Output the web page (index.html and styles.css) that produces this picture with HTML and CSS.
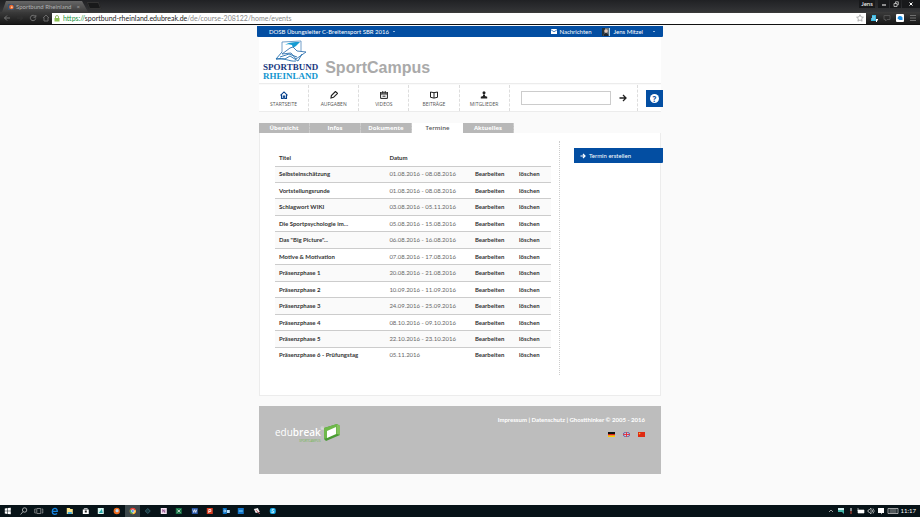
FILE: index.html
```html
<!DOCTYPE html>
<html lang="de">
<head>
<meta charset="utf-8">
<title>Sportbund Rheinland</title>
<link rel="stylesheet" href="styles.css">
</head>
<body>
<header class="browser">
  <div class="titlebar">
    <div class="browser-tab">
      <svg class="favicon" viewBox="0 0 6 6"><rect width="6" height="6" fill="#365070"/><circle cx="3.4" cy="3" r="2.3" fill="#e8682c"/><circle cx="3.8" cy="3.3" r="1" fill="#ffc29a"/></svg>
      <span class="tab-title">Sportbund Rheinland</span><span class="tab-close">×</span>
    </div>
    <div class="new-tab"></div>
    <div class="window-buttons">
      <button class="profile">Jens</button>
      <button class="win" aria-label="Minimieren"><svg viewBox="0 0 6 6"><path d="M1 4h4" stroke="#fff"/></svg></button>
      <button class="win" aria-label="Wiederherstellen"><svg viewBox="0 0 6 6"><path d="M1 2.500h3v3H1zM2.500 2.500V.8H5.300v3H4" fill="none" stroke="#ccc" stroke-width=".8"/></svg></button>
      <button class="win close" aria-label="Schließen"><svg viewBox="0 0 6 6"><path d="M1.500 1.500l3 3m0-3l-3 3" stroke="#fff"/></svg></button>
    </div>
  </div>
  <div class="toolbar">
    <div class="history">
      <svg viewBox="0 0 8 8"><path d="M7 4H1.500M4 1.500L1.500 4 4 6.500" fill="none" stroke="#747474"/></svg>
      <svg viewBox="0 0 8 8"><path d="M1 4h5.500M4 1.500L6.500 4 4 6.500" fill="none" stroke="#333"/></svg>
      <svg viewBox="0 0 8 8"><path d="M6.300 2.500A2.700 2.700 0 1 0 6.700 4.500M6.800 1v2.200H4.500" fill="none" stroke="#747474"/></svg>
      <svg viewBox="0 0 8 8"><path d="M1 4l3-3 3 3M2 3.500V7h4V3.500" fill="none" stroke="#686868"/></svg>
    </div>
    <div class="address">
      <svg class="lock" viewBox="0 0 6 7"><path d="M1.500 3V2a1.500 1.500 0 0 1 3 0v1" fill="none" stroke="#9ab86f"/><rect x=".5" y="3" width="5" height="3.500" fill="#8cc152"/></svg>
      <span class="url"><span class="scheme">https://</span><b>sportbund-rheinland.edubreak.de</b>/de/course-208122/home/events</span>
      <svg class="star" viewBox="0 0 8 8"><path d="M4 .7l1 2.200 2.400.3-1.800 1.600.5 2.400L4 6 1.900 7.200l.5-2.400L.6 3.200 3 2.900z" fill="#fff" stroke="#888" stroke-width=".6"/></svg>
    </div>
    <div class="extensions">
      <svg viewBox="0 0 8 8"><path d="M2 1h4v6H1V4h1z" fill="#38b6df"/><path d="M2 3h3M2 5h3" stroke="#d3f2fb" stroke-width=".6"/><path d="M6 5h2v1.500H7V8H6z" fill="#fff"/></svg>
      <svg viewBox="0 0 8 8"><path d="M1 1.500h6v4H4L2.500 7V5.500H1z" fill="none" stroke="#515151"/></svg>
      <svg viewBox="0 0 8 8"><rect width="8" height="8" rx="1" fill="#fff"/><path d="M1.500 4.500a2.600 2.600 0 0 1 5-1v2.400h-3z" fill="#1a91e8"/></svg>
      <svg viewBox="0 0 8 8"><path d="M1 1.500h6M1 4h6M1 6.500h6" stroke="#777" stroke-width=".9"/></svg>
    </div>
  </div>
</header>

<main class="page">
  <div class="topbar">
    <a class="course" href="#">DOSB Übungsleiter C-Breitensport SBR 2016 <i class="caret"></i></a>
    <a class="messages" href="#"><svg viewBox="0 0 6 5"><rect width="6" height="5" fill="#fff"/><path d="M0 .8l3 2 3-2" fill="none" stroke="#034ea2" stroke-width=".7"/></svg>Nachrichten</a>
    <a class="user" href="#"><svg viewBox="0 0 8 8"><rect width="8" height="8" fill="#66717c"/><path d="M0 0h3v3L1 8H0z" fill="#263238"/><circle cx="4" cy="3" r="1.800" fill="#e2c8b8"/><path d="M1.500 8c0-4 5-4 5 0" fill="#20252c"/><path d="M7.500 0v8" stroke="#a8d8f4"/></svg>Jens Mitzel <i class="caret"></i></a>
  </div>
  <div class="brand">
    <a class="logo" href="#">
      <svg viewBox="0 0 32 23">
        <path d="M7 12V2L26 1v11" fill="#fff" stroke="#5189bd" stroke-width=".8"/>
        <path d="M10 5C14 2 19 2 25 2l-4 4-3 2-1-3C14 4 12 4 10 5z" fill="#169bd2"/>
        <path d="M15 8L7 14l9-1 5 6 10-7-9-1-4-4z" fill="#fff" stroke="#3474b0" stroke-width=".9"/>
        <path d="M7 12L1 19h9l5-3 8 5 4-7M1 19c8-2 13 3 20 2M5 17l9-3 8 3" fill="none" stroke="#216eae" stroke-width=".9"/>
      </svg>
      <span class="logo-top">SPORTBUND</span><span class="logo-bottom">RHEINLAND</span>
    </a>
    <h1>SportCampus</h1>
  </div>
  <div class="mainnav">
    <nav>
      <a href="#"><svg viewBox="0 0 8 8"><path d="M.5 4.300L4 .9l3.500 3.400M1.500 3.500v4h1.800V5h1.400v2.500h1.800v-4" fill="none" stroke="#06418c" stroke-width="1.100"/></svg>STARTSEITE</a>
      <a href="#"><svg viewBox="0 0 8 8"><path d="M1 7l.4-2.500 4-4L7.500 2.300l-4 4z" fill="none" stroke="#222" stroke-width="1.200"/></svg>AUFGABEN</a>
      <a href="#"><svg viewBox="0 0 8 8"><path d="M.6 3h6.800v4.400H.6zM.6 3V1M7.400 1v2M2.800 0v2.500M5.200 0v2.500M.6 1.800h6.800M2.500 5.200h3" fill="none" stroke="#222" stroke-width="1"/></svg>VIDEOS</a>
      <a href="#"><svg viewBox="0 0 8 8"><path d="M4 1.700L.5 1v5.300l3.500.8 3.500-.8V1zM4 1.700V7" fill="none" stroke="#222" stroke-width="1"/></svg>BEITRÄGE</a>
      <a href="#"><svg viewBox="0 0 8 8"><circle cx="4" cy="1.700" r="1.500" fill="#222"/><path d="M3 3.500h2v1.500l2.200.7V7.500H.8V5.700L3 5z" fill="#222"/></svg>MITGLIEDER</a>
    </nav>
    <form class="search">
      <input type="search" aria-label="Suche">
      <button type="button" aria-label="Suchen"><svg viewBox="0 0 8 8"><path d="M.5 4H7M4 1l3 3-3 3" fill="none" stroke="#222" stroke-width="1.300"/></svg></button>
    </form>
    <div class="help-cell"><button class="help" type="button" aria-label="Hilfe"><span>?</span></button></div>
  </div>
  <nav class="tabs">
    <a href="#">Übersicht</a><a href="#">Infos</a><a href="#">Dokumente</a><a class="active" href="#">Termine</a><a href="#">Aktuelles</a>
  </nav>
  <div class="content">
    <section class="events">
      <table>
        <colgroup><col class="c-title"><col class="c-date"><col class="c-edit"><col class="c-delete"></colgroup>
        <thead><tr><th>Titel</th><th>Datum</th><th></th><th></th></tr></thead>
        <tbody>
          <tr><th>Selbsteinschätzung</th><td>01.08.2016 - 08.08.2016</td><td><a href="#">Bearbeiten</a></td><td><a href="#">löschen</a></td></tr>
          <tr><th>Vortstellungsrunde</th><td>01.08.2016 - 08.08.2016</td><td><a href="#">Bearbeiten</a></td><td><a href="#">löschen</a></td></tr>
          <tr><th>Schlagwort WIKI</th><td>03.08.2016 - 05.11.2016</td><td><a href="#">Bearbeiten</a></td><td><a href="#">löschen</a></td></tr>
          <tr><th>Die Sportpsychologie im...</th><td>05.08.2016 - 15.08.2016</td><td><a href="#">Bearbeiten</a></td><td><a href="#">löschen</a></td></tr>
          <tr><th>Das "Big Picture"...</th><td>06.08.2016 - 16.08.2016</td><td><a href="#">Bearbeiten</a></td><td><a href="#">löschen</a></td></tr>
          <tr><th>Motive &amp; Motivation</th><td>07.08.2016 - 17.08.2016</td><td><a href="#">Bearbeiten</a></td><td><a href="#">löschen</a></td></tr>
          <tr><th>Präsenzphase 1</th><td>20.08.2016 - 21.08.2016</td><td><a href="#">Bearbeiten</a></td><td><a href="#">löschen</a></td></tr>
          <tr><th>Präsenzphase 2</th><td>10.09.2016 - 11.09.2016</td><td><a href="#">Bearbeiten</a></td><td><a href="#">löschen</a></td></tr>
          <tr><th>Präsenzphase 3</th><td>24.09.2016 - 25.09.2016</td><td><a href="#">Bearbeiten</a></td><td><a href="#">löschen</a></td></tr>
          <tr><th>Präsenzphase 4</th><td>08.10.2016 - 09.10.2016</td><td><a href="#">Bearbeiten</a></td><td><a href="#">löschen</a></td></tr>
          <tr><th>Präsenzphase 5</th><td>22.10.2016 - 23.10.2016</td><td><a href="#">Bearbeiten</a></td><td><a href="#">löschen</a></td></tr>
          <tr><th>Präsenzphase 6 - Prüfungstag</th><td>05.11.2016</td><td><a href="#">Bearbeiten</a></td><td><a href="#">löschen</a></td></tr>
        </tbody>
      </table>
    </section>
    <aside><a class="create" href="#"><svg viewBox="0 0 6 6"><path d="M.5 3h4.500M3 1l2 2-2 2" fill="none" stroke="#fff" stroke-width="1.200"/></svg>Termin erstellen</a></aside>
  </div>
  <footer class="footer">
    <a class="edubreak" href="#">
      <span class="wordmark"><span class="word">edu<b>break</b></span><small>SPORTCAMPUS</small></span><sup>®</sup>
      <svg viewBox="0 0 16 17"><path d="M0 4L13 0l3 2v9L2 17l-2-2z" fill="#4a9b35"/><path d="M0 4L13 0v10L0 15z" fill="#6fb84b"/><path d="M3 7l9-4v7l-9 4z" fill="#fff"/><path d="M13 0l3 2v9l-3-1z" fill="#83c25d"/></svg>
    </a>
    <div class="footer-right">
      <div class="legal"><a href="#">Impressum</a> | <a href="#">Datenschutz</a> | <a href="#">Ghostthinker © 2005 - 2016</a></div>
      <div class="flags">
        <a href="#" aria-label="Deutsch"><svg viewBox="0 0 7 5"><path d="M0 0h7v2H0z" fill="#111"/><path d="M0 2h7v1.500H0z" fill="#d21"/><path d="M0 3.500h7V5H0z" fill="#fc0"/></svg></a>
        <a href="#" aria-label="English"><svg viewBox="0 0 7 5"><path d="M0 0h7v5H0z" fill="#35468f"/><path d="M0 0l7 5M7 0L0 5" stroke="#e8c9d4" stroke-width=".9"/><path d="M3.500 0v5M0 2.500h7" stroke="#fff" stroke-width="1.600"/><path d="M3.500 0v5M0 2.500h7" stroke="#d23" stroke-width=".9"/></svg></a>
        <a href="#" aria-label="中文"><svg viewBox="0 0 7 5"><path d="M0 0h7v5H0z" fill="#df2a12"/><circle cx="1.600" cy="1.600" r=".8" fill="#fb3"/></svg></a>
      </div>
    </div>
  </footer>
</main>

<div class="taskbar">
  <div class="apps">
    <svg viewBox="0 0 8 8"><path d="M1 1.500l2.700-.4v2.600H1zM4.200 1L7 .7v3H4.200zM1 4.200h2.700v2.700L1 6.500zM4.200 4.200H7v3L4.200 7z" fill="#fff"/></svg>
    <svg viewBox="0 0 8 8"><circle cx="4.800" cy="3" r="2.200" fill="none" stroke="#ddd" stroke-width=".7"/><path d="M3.200 4.700L.8 7.500" stroke="#ddd" stroke-width=".7"/></svg>
    <svg viewBox="0 0 8 8"><path d="M2 1.500h4v5H2zM1 2H0v4h1M7 2h1v4H7" fill="none" stroke="#aaa" stroke-width=".7"/></svg>
    <svg viewBox="0 0 8 8"><path d="M1.500 4.300h5C6.500 0 1.500.7 1.500 4.500S5 7.400 6.300 6.400" fill="none" stroke="#1683df" stroke-width="1.300"/></svg>
    <svg viewBox="0 0 8 8"><path d="M1 1h3l.5 1H7v5H1z" fill="#f8e38e"/><path d="M2 5h4v2H2z" fill="#45aee4"/></svg>
    <svg viewBox="0 0 8 8"><path d="M1 2.500h6V7H1z" fill="#fff"/><path d="M2.500 2.500v-1h3v1" fill="none" stroke="#fff" stroke-width=".7"/><path d="M3 3.500h2v2H3z" fill="#222"/></svg>
    <svg viewBox="0 0 8 8"><path d="M1 1h6v6H1z" fill="#d9f6f1"/><path d="M2 6l3-4 1 4z" fill="#25a9ab"/></svg>
    <svg viewBox="0 0 8 8"><circle cx="4" cy="4" r="3.200" fill="#ef6b1c"/><circle cx="4.300" cy="3.700" r="1.600" fill="#bcd7f1"/></svg>
    <svg class="running" viewBox="0 0 8 8"><circle cx="4" cy="4" r="3.200" fill="#e84335"/><path d="M4 4L1.200 2.400A3.200 3.200 0 0 0 4 7.200z" fill="#35a952"/><path d="M4 4l3-1a3.200 3.200 0 0 1-3 4.200z" fill="#fbd03c"/><circle cx="4" cy="4" r="1.500" fill="#5a90ef" stroke="#fff" stroke-width=".5"/></svg>
    <svg viewBox="0 0 8 8"><path d="M4 1.500L6.500 4 4 6.500 1.500 4z" fill="#12353d" stroke="#47727c" stroke-width=".7"/></svg>
    <svg viewBox="0 0 8 8"><path d="M1 1h6v6H1z" fill="#f5e5f4"/><path d="M3 5.500v-3l2 3v-3" fill="none" stroke="#80397b" stroke-width=".8"/></svg>
    <svg viewBox="0 0 8 8"><path d="M1 1h6v6H1z" fill="#187346"/><path d="M2.500 2.500l3 3m0-3l-3 3" stroke="#fff" stroke-width=".8"/></svg>
    <svg viewBox="0 0 8 8"><path d="M1 1h6v6H1z" fill="#2856a6"/><path d="M2 2.500l1 3 1-3 1 3 1-3" fill="none" stroke="#fff" stroke-width=".7"/></svg>
    <svg viewBox="0 0 8 8"><path d="M1 1h6v6H1z" fill="#d83c20"/><path d="M3 6V2.500h2v2H3" fill="none" stroke="#fff" stroke-width=".8"/></svg>
    <svg viewBox="0 0 8 8"><path d="M1 1h4v6H1z" fill="#0872c6"/><path d="M5 3h3v3H5z" fill="#bce1fb"/><circle cx="3" cy="4" r="1" fill="none" stroke="#fff" stroke-width=".6"/></svg>
    <svg viewBox="0 0 8 8"><path d="M1 1h6v6H1z" fill="#1475ca"/><path d="M2 3h4v2H2z" fill="#4ca7e3"/></svg>
    <svg viewBox="0 0 8 8"><path d="M1 2l4-1 2 4-4 1z" fill="#eee"/><path d="M3 3l4 4" stroke="#c65360"/></svg>
    <svg viewBox="0 0 8 8"><rect x="1" y="1" width="6" height="6" rx="2" fill="#15a9e7"/><path d="M5.500 2.700C3.500 1.500 2 3.400 4 4s1.500 2.200-1.500 1.200" fill="none" stroke="#fff" stroke-width=".8"/></svg>
  </div>
  <div class="tray">
    <svg viewBox="0 0 8 8"><path d="M2 5l2-2 2 2" fill="none" stroke="#ddd" stroke-width=".7"/></svg>
    <svg viewBox="0 0 8 8"><path d="M1 1h6v6L5 5H1z" fill="#44b4a9"/><path d="M1 1h6v2H1z" fill="#d4eeee"/></svg>
    <svg viewBox="0 0 8 8"><path d="M4 1v3" stroke="#fff"/><path d="M4 4v3" stroke="#d64c39"/></svg>
    <svg viewBox="0 0 8 8"><path d="M1 3h6v3H1zM1 1v3" fill="#fff" stroke="#fff" stroke-width=".6"/></svg>
    <svg viewBox="0 0 8 8"><path d="M1 3h1l2-2v6L2 5H1zM5 2.500q1.500 1.500 0 3M6 1.500q2.500 2.500 0 5" fill="none" stroke="#eee" stroke-width=".6"/></svg>
    <svg viewBox="0 0 8 8"><path d="M1 1h6v5H5L4 7.500V6H1z" fill="#fff"/></svg>
    <svg class="keyboard" viewBox="0 0 12 8"><path d="M1 1.500h10v5H1zM2.500 3h7M2.500 5h7" fill="none" stroke="#ddd" stroke-width=".7" /></svg>
    <time>11:17</time>
  </div>
</div>
</body>
</html>
```
FILE: styles.css
```css
:root {
  --blue: #034ea2;
  --line: #ececec;
  --gray: #b8b8b8;
}

* { box-sizing: border-box; }

body {
  margin: 0;
  min-height: 100vh;
  display: flex;
  flex-direction: column;
  background: #fafafa;
  color: #333;
  font: 6px/8px Lato, "Open Sans", sans-serif;
}

a { color: inherit; text-decoration: none; }
svg { display: block; flex: none; width: 8px; height: 8px; }
button { font: inherit; border: 0; padding: 0; background: none; color: inherit; }

/* Browser window */
.browser { background: #242527; border-bottom: 1px solid #111; }
.titlebar { display: flex; align-items: flex-end; height: 12px; background: linear-gradient(#202124, #343537); }
.browser-tab {
  display: flex; align-items: center; gap: 2px;
  width: 86px; height: 11px; margin-left: 2px; padding: 0 8px 0 6px;
  background: linear-gradient(#666, #3d3d3d);
  clip-path: polygon(4px 0, 80px 0, 100% 100%, 0 100%);
  color: #aaa;
}
.favicon { width: 6px; height: 6px; }
.tab-title { flex: 1; white-space: nowrap; color: #b0b0b0; }
.new-tab { width: 12px; height: 7px; margin-bottom: 3px; background: #18191a; border: 1px solid #333; transform: skewX(20deg); }
.window-buttons { display: flex; gap: 1px; margin-left: auto; align-self: flex-start; height: 8px; }
.window-buttons button { display: grid; place-items: center; background: #18191b; color: #fff; }
.profile { width: 16px; margin-right: 2px; }
.win { width: 11px; }
.close { width: 18px; }
.win svg { width: 6px; height: 6px; }
.toolbar { display: flex; align-items: center; height: 12px; background: linear-gradient(#3b3b3b, #181818); }
.history { display: flex; gap: 5px; width: 52px; padding-left: 3px; }
.address { flex: 1; display: flex; align-items: center; gap: 3px; height: 11px; padding: 0 2px; background: #fff; }
.lock { width: 6px; height: 7px; }
.url { flex: 1; color: #888; font-size: 7px; }
.url b { color: #222; font-weight: 400; }
.scheme { color: #21923b; }
.extensions { display: flex; gap: 5px; padding: 0 3px 0 4px; }

/* Page */
.page { flex: 1; width: 43.7%; min-width: 402px; max-width: 1100px; margin: 1px auto 0; }
.topbar {
  display: flex; align-items: center;
  margin: 0 -2px; height: 11px; padding: 0 8px 0 12px;
  background: var(--blue); color: #fff; border-radius: 0 0 1px 1px;
}
.course { flex: 1; }
.caret { display: inline-block; width: 2px; height: 1px; margin-left: 2px; background: #8fb4dd; vertical-align: middle; }
.messages, .user { display: flex; align-items: center; gap: 2px; }
.messages svg { width: 6px; height: 5px; }
.user { gap: 4px; margin-left: 10px; }
.user .caret { margin-left: 6px; }
.brand { display: flex; align-items: flex-end; gap: 7px; height: 47px; padding: 0 4px 2px; background: #fff; border-bottom: 1px solid var(--line); }
.logo { display: flex; flex-direction: column; align-items: center; font: bold 9px/9px "Liberation Serif", "Times New Roman", serif; }
.logo svg { width: 32px; height: 23px; }
.logo-top { color: #17387e; }
.logo-bottom { color: #1295cf; }
h1 { margin: 0; padding-bottom: 4px; font: bold 16px/18px "Liberation Sans", Arial, sans-serif; color: #aaa; }

.mainnav { display: flex; height: 27px; margin-top: 1px; background: #fff; border-bottom: 1px solid var(--line); }
.mainnav nav { display: flex; flex: 5; }
.mainnav nav a {
  flex: 1; display: flex; flex-direction: column; align-items: center; gap: 1px;
  padding-top: 6px; border-right: 1px dashed #ddd; color: #555; font-size: 5px; font-family: "Open Sans", sans-serif;
}
.search { flex: 2; flex-basis: 28px; display: flex; align-items: center; gap: 8px; padding: 0 10px 0 11px; border-right: 1px dashed #ddd; }
.search input { flex: 1; min-width: 0; height: 14px; padding: 0 3px; border: 1px solid #ccc; background: #fff; font: inherit; }
.help-cell { display: flex; align-items: center; padding-left: 8px; margin-right: -2px; }
.help { display: grid; place-items: center; width: 17px; height: 17px; background: var(--blue); }
.help span { width: 9px; height: 9px; border-radius: 50%; background: #fff; color: var(--blue); font: bold 8px/9px "Open Sans", sans-serif; text-align: center; }

.tabs { display: flex; margin-top: 11px; height: 10px; font-family: "Open Sans", sans-serif; }
.tabs a {
  width: 51px; line-height: 10px; text-align: center;
  background: var(--gray); color: #fff; font-weight: 700;
  border-right: 1px dashed #ccc;
}
.tabs .active { background: #fff; color: #555; font-weight: 600; border-right: 0; }

.content { display: flex; min-height: 263px; padding: 8px 0 20px 15px; background: #fff; border: 1px solid var(--line); border-width: 0 1px 1px; }
.events { flex: 1; padding: 9px 8px 0 0; border-right: 1px dotted #ccc; }
table { width: 100%; height: 213px; border-collapse: collapse; table-layout: fixed; }
thead tr { height: 16px; }
.c-title { width: 40%; }
.c-date { width: 31%; }
.c-edit { width: 16%; }
.c-delete { width: 13%; }
th, td { padding: 0 0 0 4px; text-align: left; white-space: nowrap; color: #666; border-bottom: 1px solid #ccc; }
th, td a { color: #333; font-weight: 700; }
tbody tr:nth-child(odd) { background: #fafafa; }
tbody tr:last-child > * { border-bottom: 0; }
aside { width: 100px; padding-top: 7px; }
.create { display: flex; align-items: center; gap: 3px; height: 15px; margin: 0 -3px 0 14px; padding-left: 6px; background: var(--blue); color: #fff; border-radius: 0 0 1px 0; }
.create svg { width: 6px; height: 6px; }

.footer { display: flex; justify-content: space-between; min-height: 68px; margin-top: 10px; padding: 10px 16px; background: #bdbdbd; color: #fff; }
.edubreak { display: flex; align-items: flex-start; padding-top: 8px; font-family: "Open Sans", sans-serif; }
.wordmark { display: flex; flex-direction: column; font-size: 10px; line-height: 14px; padding-top: 1px; }
.wordmark b { font-weight: 600; }
.wordmark small { align-self: flex-end; font-size: 3px; line-height: 4px; color: #6fb84b; }
.edubreak sup { font-size: 4px; line-height: 10px; }
.edubreak svg { width: 16px; height: 17px; }
.footer-right { display: flex; flex-direction: column; align-items: flex-end; gap: 8px; }
.legal { font-weight: 700; }
.flags { display: flex; gap: 8px; }
.flags svg { width: 7px; height: 5px; }

/* Taskbar */
.taskbar { display: flex; align-items: center; justify-content: space-between; height: 12px; padding: 0 4px 0 0; background: #071318; color: #fff; }
.apps { display: flex; align-items: center; width: 280px; }
.apps svg { flex: 1; }
.apps .running { height: 12px; padding: 2px 0; background: #3b464a; }
.tray { display: flex; align-items: center; gap: 2px; }
.keyboard { width: 12px; }
```
